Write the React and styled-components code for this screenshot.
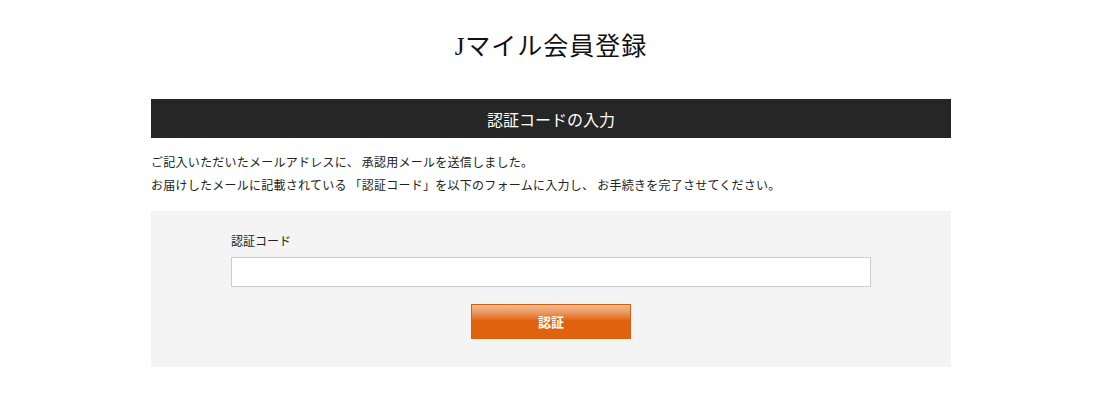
import React from 'react'
import styled, { createGlobalStyle } from 'styled-components'

const GlobalStyle = createGlobalStyle`
  html, body {
    margin: 0;
    padding: 0;
    background: #fff;
  }
  body {
    font-family: 'Noto Sans CJK JP', 'Noto Sans', sans-serif;
    color: #222;
  }
`

const Page = styled.div`
  padding-left: 2px;
`

const Container = styled.div`
  width: 800px;
  margin: 0 auto;
`

const Title = styled.h1`
  margin: 0;
  padding-top: 30px;
  height: 99px;
  box-sizing: border-box;
  text-align: center;
  font-family: 'Liberation Serif', 'Noto Sans CJK JP', serif;
  font-weight: 400;
  font-size: 25px;
  line-height: 34px;
  color: #111;
  letter-spacing: 1px;
`

const SectionBar = styled.h2`
  margin: 0;
  height: 39px;
  background: #262626;
  color: #fff;
  display: flex;
  align-items: center;
  justify-content: center;
  font-family: 'Liberation Serif', 'Noto Sans CJK JP', serif;
  font-weight: 400;
  font-size: 16px;
`

const Lead = styled.p`
  margin: 12px 0 15px;
  font-size: 12px;
  line-height: 23px;
  letter-spacing: 0.25px;
  color: #222;
`

const FormPanel = styled.div`
  background: #f4f4f4;
  padding: 21px 80px 28px;
  display: flex;
  flex-direction: column;
`

const Label = styled.label`
  font-size: 12px;
  line-height: 18px;
  color: #222;
  margin-bottom: 7px;
`

const TextInput = styled.input`
  height: 30px;
  box-sizing: border-box;
  border: 1px solid #ccc;
  background: #fff;
  padding: 0 8px;
  font-size: 13px;
  outline: none;
`

const SubmitButton = styled.button`
  align-self: center;
  margin-top: 17px;
  width: 160px;
  height: 35px;
  border: 1px solid #d9600f;
  background: linear-gradient(to bottom, #f3bb96 0%, #eb9459 25%, #e0620f 48%, #e0620f 100%);
  color: #fff;
  font-family: 'Noto Sans CJK JP', sans-serif;
  font-size: 13px;
  font-weight: 700;
  cursor: pointer;
`

const App = () => (
  <Page>
    <GlobalStyle />
    <Container>
      <Title>Jマイル会員登録</Title>
      <SectionBar>認証コードの入力</SectionBar>
      <Lead>
        ご記入いただいたメールアドレスに、 承認用メールを送信しました。
        <br />
        お届けしたメールに記載されている 「認証コード」を以下のフォームに入力し、 お手続きを完了させてください。
      </Lead>
      <FormPanel>
        <Label htmlFor="code">認証コード</Label>
        <TextInput id="code" type="text" />
        <SubmitButton type="button">認証</SubmitButton>
      </FormPanel>
    </Container>
  </Page>
)

export default App
